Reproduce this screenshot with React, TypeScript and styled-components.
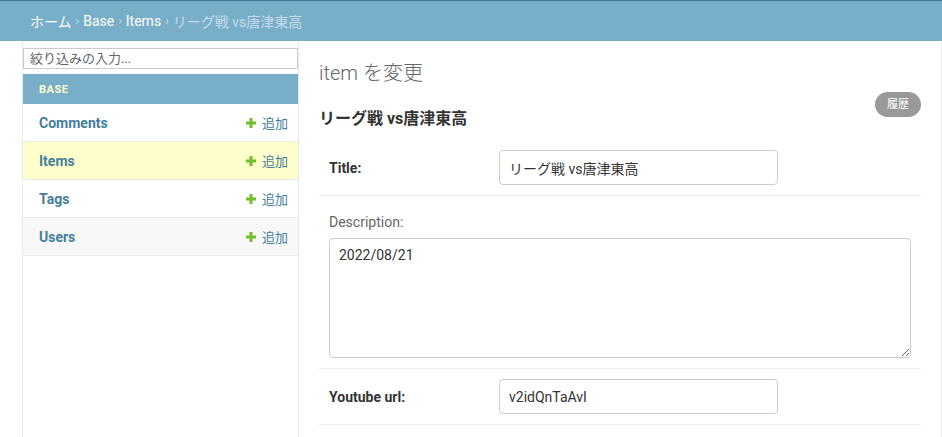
import React from 'react';
import styled, { createGlobalStyle } from 'styled-components';

const GlobalStyle = createGlobalStyle`
  body {
    margin: 0;
    background: #fff;
    font-family: Roboto, "Noto Sans CJK JP", "Lucida Grande", Verdana, sans-serif;
    color: #333;
  }
  * {
    box-sizing: border-box;
  }
`;

const Breadcrumbs = styled.div`
  height: 41px;
  border-top: 1px solid #417690;
  background: #79aec8;
  padding: 0 30px;
  display: flex;
  align-items: center;
  font-size: 14px;
  color: #fff;
`;

const Crumb = styled.span<{ $current?: boolean }>`
  color: ${({ $current }) => ($current ? '#c4dce8' : '#fff')};
`;

const Sep = styled.span`
  color: #c4dce8;
  margin: 0 4px;
  font-size: 12px;
`;

const Main = styled.div`
  display: flex;
  align-items: stretch;
  min-height: 396px;
`;

const Toggle = styled.div`
  width: 23px;
  flex: none;
  border-right: 1px solid #eaeaea;
`;

const Sidebar = styled.nav`
  width: 276px;
  flex: none;
  border-right: 1px solid #eaeaea;
  padding-top: 7px;
`;

const Filter = styled.input`
  display: block;
  width: 275px;
  height: 21px;
  margin: 0 0 5px 0;
  padding: 2px 6px;
  border: 1px solid #ccc;
  font-family: inherit;
  font-size: 13px;
  color: #333;
  &::placeholder {
    color: #666;
  }
`;

const Caption = styled.div`
  height: 30px;
  background: #79aec8;
  color: #ffc;
  font-size: 11px;
  font-weight: 700;
  letter-spacing: 0.5px;
  text-transform: uppercase;
  display: flex;
  align-items: center;
  padding-left: 16px;
`;

const ModelRow = styled.div<{ $bg: string }>`
  height: 38px;
  background: ${({ $bg }) => $bg};
  border-bottom: 1px solid #eaeaea;
  display: flex;
  align-items: center;
  justify-content: space-between;
  padding: 0 10px 0 16px;
`;

const ModelName = styled.a`
  color: #447e9b;
  font-size: 14px;
  font-weight: 700;
  text-decoration: none;
`;

const AddLink = styled.a`
  display: flex;
  align-items: center;
  gap: 6px;
  color: #447e9b;
  font-size: 13px;
  text-decoration: none;
`;

const Content = styled.main`
  flex: 1;
  padding: 20px 20px 0 20px;
  border-right: 1px solid #eaeaea;
`;

const Title = styled.h1`
  margin: 0;
  font-size: 20px;
  line-height: 24px;
  font-weight: 300;
  color: #666;
`;

const HeadRow = styled.div`
  display: flex;
  justify-content: space-between;
  align-items: flex-start;
  margin-top: 7px;
`;

const Subtitle = styled.h2`
  margin: 17px 0 0 0;
  font-size: 16px;
  line-height: 20px;
  font-weight: 700;
  color: #333;
`;

const HistoryButton = styled.a`
  display: block;
  height: 25px;
  line-height: 25px;
  padding: 0 12px;
  border-radius: 15px;
  background: #999;
  color: #fff;
  font-size: 11px;
  text-decoration: none;
`;

const Fieldset = styled.div`
  margin-top: 11px;
`;

const FormRow = styled.div<{ $stacked?: boolean }>`
  padding: 10px;
  border-bottom: 1px solid #eee;
  display: flex;
  flex-direction: ${({ $stacked }) => ($stacked ? 'column' : 'row')};
  align-items: ${({ $stacked }) => ($stacked ? 'flex-start' : 'center')};
`;

const Label = styled.label<{ $required?: boolean; $stacked?: boolean }>`
  width: ${({ $stacked }) => ($stacked ? 'auto' : '170px')};
  flex: none;
  font-size: 14px;
  line-height: 16px;
  font-weight: ${({ $required }) => ($required ? 700 : 400)};
  color: ${({ $required }) => ($required ? '#333' : '#666')};
  padding: ${({ $stacked }) => ($stacked ? '8px 0 8px 0' : '0')};
`;

const TextInput = styled.input`
  width: 279px;
  height: 35px;
  padding: 5px 9px;
  border: 1px solid #ccc;
  border-radius: 4px;
  font-family: inherit;
  font-size: 14px;
  color: #333;
`;

const TextArea = styled.textarea`
  width: 582px;
  height: 120px;
  padding: 6px 9px;
  border: 1px solid #ccc;
  border-radius: 4px;
  font-family: inherit;
  font-size: 14px;
  line-height: 20px;
  color: #333;
`;

const PlusIcon = () => (
  <svg width="10" height="10" viewBox="0 0 10 10">
    <path d="M3.5 0h3v3.5H10v3H6.5V10h-3V6.5H0v-3h3.5z" fill="#70bf2b" />
  </svg>
);

const models = [
  { name: 'Comments', bg: '#fff' },
  { name: 'Items', bg: '#ffc' },
  { name: 'Tags', bg: '#fff' },
  { name: 'Users', bg: '#f8f8f8' },
];

export default function App() {
  return (
    <>
      <GlobalStyle />
      <Breadcrumbs>
        <Crumb>ホーム</Crumb>
        <Sep>›</Sep>
        <Crumb>Base</Crumb>
        <Sep>›</Sep>
        <Crumb>Items</Crumb>
        <Sep>›</Sep>
        <Crumb $current>リーグ戦 vs唐津東高</Crumb>
      </Breadcrumbs>
      <Main>
        <Toggle />
        <Sidebar>
          <Filter placeholder="絞り込みの入力..." />
          <Caption>Base</Caption>
          {models.map((m) => (
            <ModelRow key={m.name} $bg={m.bg}>
              <ModelName href="#">{m.name}</ModelName>
              <AddLink href="#">
                <PlusIcon />
                追加
              </AddLink>
            </ModelRow>
          ))}
        </Sidebar>
        <Content>
          <Title>item を変更</Title>
          <HeadRow>
            <Subtitle>リーグ戦 vs唐津東高</Subtitle>
            <HistoryButton href="#">履歴</HistoryButton>
          </HeadRow>
          <Fieldset>
            <FormRow>
              <Label $required>Title:</Label>
              <TextInput defaultValue="リーグ戦 vs唐津東高" />
            </FormRow>
            <FormRow $stacked>
              <Label $stacked>Description:</Label>
              <TextArea defaultValue="2022/08/21" />
            </FormRow>
            <FormRow>
              <Label $required>Youtube url:</Label>
              <TextInput defaultValue="v2idQnTaAvI" />
            </FormRow>
          </Fieldset>
        </Content>
      </Main>
    </>
  );
}
